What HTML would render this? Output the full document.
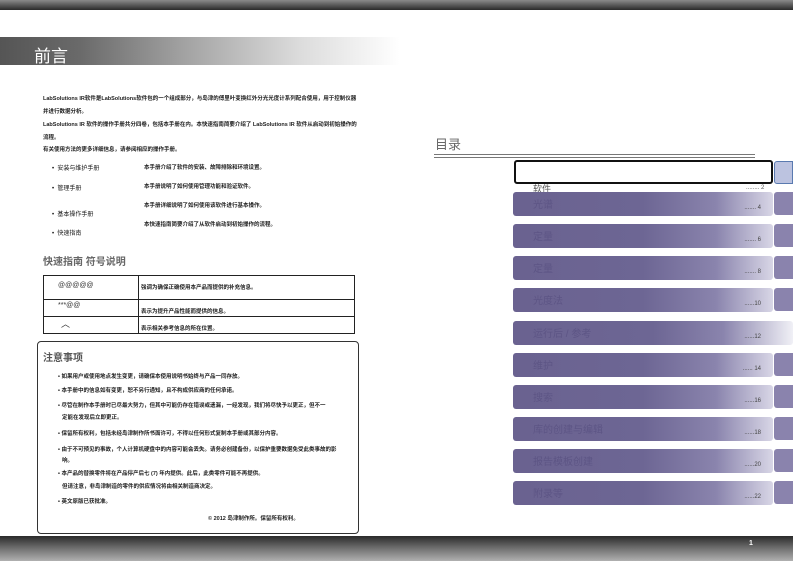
<!DOCTYPE html>
<html><head><meta charset="utf-8"><style>
*{margin:0;padding:0;box-sizing:border-box}
body{width:793px;height:561px;position:relative;overflow:hidden;background:#fff;font-family:"Liberation Sans","Noto Sans CJK SC",sans-serif;color:#111}
.a{position:absolute;white-space:nowrap}
.s{font-size:5.5px;font-weight:bold;color:#222}
.bar{position:absolute;left:513px;width:260px;height:24px;border-radius:3px;background:linear-gradient(90deg,#6a6290 0%,#6d6694 50%,#8a84ad 78%,#d8d6e6 100%)}
.bar span{position:absolute;right:12px;top:13px;font-size:6px;color:#444}
.bar b{position:absolute;left:20px;top:4px;font-size:10px;font-weight:normal;color:#5d5585}
.tab{position:absolute;left:774px;width:19px;height:23px;border-radius:3px 0 0 3px;background:#8a83ad}
</style></head><body>
<div class="a" style="left:0;top:0;width:793px;height:10px;background:linear-gradient(#8a8a8a,#2a2a2a)"></div>
<div class="a" style="left:0;top:37px;width:400px;height:28px;background:linear-gradient(90deg,#555 0%,#6a6a6a 20%,#a0a0a0 45%,#dcdcdc 75%,#fff 100%);overflow:hidden">
<div class="a" style="left:34px;top:11px;font-size:17px;line-height:17px;color:#fff">前言</div></div>

<div class="a s" style="left:43px;top:94px">LabSolutions IR软件是LabSolutions软件包的一个组成部分，与岛津的傅里叶变换红外分光光度计系列配合使用，用于控制仪器</div>
<div class="a s" style="left:43px;top:107px">并进行数据分析。</div>
<div class="a s" style="left:43px;top:120px">LabSolutions IR 软件的操作手册共分四卷，包括本手册在内。本快速指南简要介绍了 LabSolutions IR 软件从启动到初始操作的</div>
<div class="a s" style="left:43px;top:133px">流程。</div>
<div class="a s" style="left:43px;top:145px">有关使用方法的更多详细信息，请参阅相应的操作手册。</div>
<div class="a" style="left:52px;top:163px;font-size:6px">•&nbsp; 安装与维护手册</div>
<div class="a" style="left:52px;top:183px;font-size:6px">•&nbsp; 管理手册</div>
<div class="a" style="left:52px;top:209px;font-size:6px">•&nbsp; 基本操作手册</div>
<div class="a" style="left:52px;top:228px;font-size:6px">•&nbsp; 快速指南</div>
<div class="a s" style="left:144px;top:163px">本手册介绍了软件的安装、故障排除和环境设置。</div>
<div class="a s" style="left:144px;top:182px">本手册说明了如何使用管理功能和验证软件。</div>
<div class="a s" style="left:144px;top:201px">本手册详细说明了如何使用该软件进行基本操作。</div>
<div class="a s" style="left:144px;top:220px">本快速指南简要介绍了从软件启动到初始操作的流程。</div>

<div class="a" style="left:43px;top:253px;font-size:10px;color:#666;font-weight:bold">快速指南 符号说明</div>
<div class="a" style="left:43px;top:275px;width:312px;height:59px;border:1px solid #222"></div>
<div class="a" style="left:43px;top:299px;width:312px;border-top:1px solid #222"></div>
<div class="a" style="left:43px;top:316px;width:312px;border-top:1px solid #222"></div>
<div class="a" style="left:138px;top:275px;height:59px;border-left:1px solid #222"></div>
<div class="a" style="left:58px;top:282px;font-size:7px;color:#333">@@@@@</div>
<div class="a" style="left:58px;top:302px;font-size:7px;color:#333">***@@</div>
<div class="a" style="left:61px;top:317px;font-size:9px;color:#333">︿</div>
<div class="a s" style="left:141px;top:283px">强调为确保正确使用本产品而提供的补充信息。</div>
<div class="a s" style="left:141px;top:307px">表示为提升产品性能而提供的信息。</div>
<div class="a s" style="left:141px;top:324px">表示相关参考信息的所在位置。</div>

<div class="a" style="left:37px;top:341px;width:322px;height:193px;border:1.5px solid #333;border-radius:4px"></div>
<div class="a" style="left:43px;top:349px;font-size:10px;color:#555;font-weight:bold">注意事项</div>
<div class="a s" style="left:58px;top:372px">• 如果用户或使用地点发生变更，请确保本使用说明书始终与产品一同存放。</div>
<div class="a s" style="left:58px;top:386px">• 本手册中的信息如有变更，恕不另行通知，且不构成供应商的任何承诺。</div>
<div class="a s" style="left:58px;top:401px">• 尽管在制作本手册时已尽最大努力，但其中可能仍存在错误或遗漏，一经发现，我们将尽快予以更正，但不一</div>
<div class="a s" style="left:62px;top:413px">定能在发现后立即更正。</div>
<div class="a s" style="left:58px;top:429px">• 保留所有权利，包括未经岛津制作所书面许可，不得以任何形式复制本手册或其部分内容。</div>
<div class="a s" style="left:58px;top:445px">• 由于不可预见的事故，个人计算机硬盘中的内容可能会丢失。请务必创建备份，以保护重要数据免受此类事故的影</div>
<div class="a s" style="left:62px;top:456px">响。</div>
<div class="a s" style="left:58px;top:469px">• 本产品的替换零件将在产品停产后七 (7) 年内提供。此后，此类零件可能不再提供。</div>
<div class="a s" style="left:62px;top:482px">但请注意，非岛津制造的零件的供应情况将由相关制造商决定。</div>
<div class="a s" style="left:58px;top:497px">• 英文原版已获批准。</div>
<div class="a s" style="left:208px;top:514px">© 2012 岛津制作所。保留所有权利。</div>

<div class="a" style="left:435px;top:134px;font-size:13px;color:#666">目录</div>
<div class="a" style="left:434px;top:154px;width:321px;height:4px;border-top:1.5px solid #777;border-bottom:1px solid #777"></div>
<div class="a" style="left:514px;top:160px;width:259px;height:24px;border:2px solid #111;border-radius:3px;background:#fff"></div>
<div class="tab" style="top:161px;background:#bcc3e0;border:1px solid #5a7ab0"></div>
<div class="a" style="left:533px;top:182px;font-size:9px;color:#555">软件</div>
<div class="a" style="left:746px;top:185px;font-size:6px;color:#555">........ 2</div>

<div class="bar" style="top:192px"><b>光谱</b><span>....... 4</span></div><div class="tab" style="top:192px"></div>
<div class="bar" style="top:224px"><b>定量</b><span>....... 6</span></div><div class="tab" style="top:224px"></div>
<div class="bar" style="top:256px"><b>定量</b><span>....... 8</span></div><div class="tab" style="top:256px"></div>
<div class="bar" style="top:288px"><b>光度法</b><span>......10</span></div><div class="tab" style="top:288px"></div>
<div class="bar" style="top:321px;width:280px;background:linear-gradient(90deg,#6a6290 0%,#6d6694 50%,#8a84ad 75%,#f0f0f6 100%)"><b>运行后 / 参考</b><span style="right:32px">......12</span></div>
<div class="bar" style="top:353px"><b>维护</b><span>...... 14</span></div><div class="tab" style="top:353px"></div>
<div class="bar" style="top:385px"><b>搜索</b><span>......16</span></div><div class="tab" style="top:385px"></div>
<div class="bar" style="top:417px"><b>库的创建与编辑</b><span>......18</span></div><div class="tab" style="top:417px"></div>
<div class="bar" style="top:449px"><b>报告模板创建</b><span>......20</span></div><div class="tab" style="top:449px"></div>
<div class="bar" style="top:481px"><b>附录等</b><span>......22</span></div><div class="tab" style="top:481px"></div>

<div class="a" style="left:0;top:536px;width:793px;height:25px;background:linear-gradient(#2a2a2a,#6a6a6a 45%,#b0b0b0)"></div>
<div class="a" style="left:749px;top:540px;font-size:7px;color:#fff;font-weight:bold">1</div>
</body></html>
